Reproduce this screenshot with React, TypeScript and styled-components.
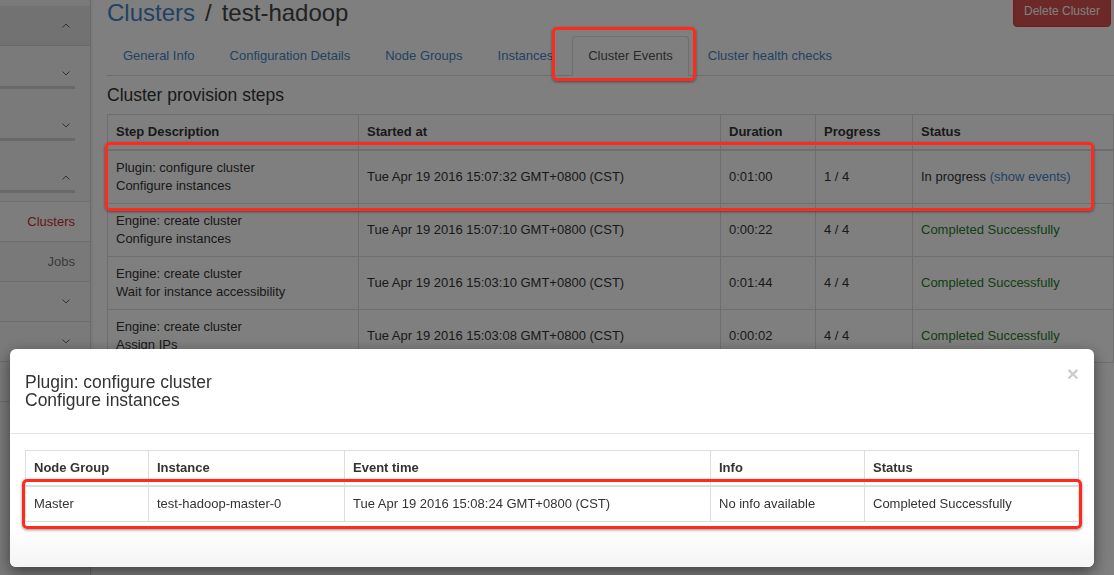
import styled, { createGlobalStyle } from "styled-components";

const GlobalStyle = createGlobalStyle`
  * { box-sizing: border-box; }
  html, body { margin: 0; padding: 0; height: 100%; overflow: hidden; }
  body {
    font-family: "Liberation Sans", Arial, sans-serif;
    font-size: 13px;
    line-height: 18px;
    color: #333;
    background: #fff;
  }
`;

const linkColor = "#3f86c6";
const borderColor = "#ddd";

const Page = styled.div`
  display: flex;
  height: 100vh;
`;

/* ---------- sidebar ---------- */

const Sidebar = styled.nav`
  width: 91px;
  flex: none;
  background: #f4f4f4;
  border-right: 1px solid #d4d4d4;
  box-shadow: 1px 0 3px rgba(0, 0, 0, 0.08);
  padding-top: 6px;
`;

const GroupHeader = styled.div`
  height: 40px;
  background: #e4e4e4;
  border-bottom: 1px solid #d2d2d2;
  display: flex;
  align-items: center;
  justify-content: flex-end;
  padding-right: 20px;
`;

const SubGroup = styled.div<{ $tall?: boolean }>`
  height: ${(p) => (p.$tall ? 52 : 43)}px;
  position: relative;
  display: flex;
  align-items: flex-end;
  justify-content: flex-end;
  padding: 0 20px 13px 0;

  &::after {
    content: "";
    position: absolute;
    left: 0;
    bottom: 0;
    width: 75px;
    height: 3px;
    background: #d2d2d2;
  }
`;

const PanelEnd = styled.div`
  height: 9px;
  border-bottom: 1px solid #e2e2e2;
`;

const NavItem = styled.div<{ $active?: boolean }>`
  height: 40px;
  display: flex;
  align-items: center;
  justify-content: flex-end;
  padding-right: 15px;
  color: ${(p) => (p.$active ? "#c9302c" : "#777")};
  background: ${(p) => (p.$active ? "#fbfbfb" : "#f2f2f2")};
  border-bottom: 1px solid #dadada;
`;

const CollapsedRow = styled.div`
  height: 40px;
  border-bottom: 1px solid #d8d8d8;
  display: flex;
  align-items: center;
  justify-content: flex-end;
  padding-right: 20px;
`;

function Chevron({ up }: { up?: boolean }) {
  return (
    <svg width="8" height="5" viewBox="0 0 8 5">
      <polyline
        points={up ? "0.5,4.5 4,1 7.5,4.5" : "0.5,0.5 4,4 7.5,0.5"}
        fill="none"
        stroke="#666"
        strokeWidth="1"
      />
    </svg>
  );
}

/* ---------- main ---------- */

const Main = styled.main`
  flex: 1;
  min-width: 0;
  padding-left: 16px;
`;

const PageHeader = styled.div`
  display: flex;
  justify-content: space-between;
  align-items: flex-start;
  height: 26px;
`;

const Title = styled.h1`
  margin: 0;
  font-size: 24px;
  line-height: 26px;
  font-weight: normal;
  color: #444;

  a {
    color: ${linkColor};
    text-decoration: none;
  }
`;

const Sep = styled.span`
  margin: 0 10px;
  color: #444;
`;

const DangerButton = styled.button`
  margin: -5px 3px 0 0;
  padding: 6px 10px;
  font-family: inherit;
  font-size: 12px;
  line-height: 18px;
  color: #fff;
  background: #d9534f;
  border: 1px solid #d43f3a;
  border-radius: 4px;
`;

const Tabs = styled.ul`
  display: flex;
  list-style: none;
  margin: 10px 0 0;
  padding: 0;
  border-bottom: 1px solid ${borderColor};
`;

const Tab = styled.li<{ $active?: boolean }>`
  margin: 0 3px -1px 0;
  padding: 10px 15px;
  border: 1px solid transparent;
  border-radius: 4px 4px 0 0;
  color: ${linkColor};
  white-space: nowrap;
  ${(p) =>
    p.$active &&
    `
    color: #555;
    background: #fff;
    border-color: ${borderColor};
    border-bottom-color: transparent;
  `}
`;

const SectionTitle = styled.h3`
  margin: 10px 0 9px;
  font-size: 17.5px;
  line-height: 19px;
  font-weight: 500;
  color: #333;
`;

const Table = styled.table`
  width: 100%;
  border-collapse: collapse;
  table-layout: fixed;
  border: 1px solid ${borderColor};
`;

const Th = styled.th<{ $w?: number }>`
  ${(p) => (p.$w ? `width: ${p.$w}px;` : "")}
  text-align: left;
  padding: 8px;
  font-weight: bold;
  border: 1px solid ${borderColor};
  border-bottom-width: 2px;
  white-space: nowrap;
`;

const Td = styled.td`
  padding: 8px;
  border: 1px solid ${borderColor};
  vertical-align: middle;
  white-space: nowrap;
  overflow: hidden;
`;

const Status = styled.span<{ $ok?: boolean }>`
  color: ${(p) => (p.$ok ? "#238023" : "#333")};
`;

const Link = styled.a`
  color: ${linkColor};
  text-decoration: none;
`;

/* ---------- overlay, modal, annotations ---------- */

const Backdrop = styled.div`
  position: fixed;
  inset: 0;
  background: rgba(0, 0, 0, 0.5);
  z-index: 10;
`;

const Modal = styled.div`
  position: fixed;
  left: 10px;
  top: 349px;
  width: 1084px;
  background: #fff;
  border-radius: 6px;
  box-shadow: 0 5px 15px rgba(0, 0, 0, 0.5);
  overflow: hidden;
  z-index: 20;
`;

const ModalHeader = styled.div`
  display: flex;
  justify-content: space-between;
  align-items: flex-start;
  padding: 24px 15px;
  border-bottom: 1px solid #e5e5e5;
`;

const ModalTitle = styled.h4`
  margin: 0;
  font-size: 17.5px;
  line-height: 18px;
  font-weight: normal;
  color: #333;
`;

const Close = styled.button`
  margin-top: -10px;
  padding: 0;
  border: 0;
  background: none;
  font-family: "Liberation Sans", Arial, sans-serif;
  font-size: 21px;
  line-height: 21px;
  font-weight: bold;
  color: #000;
  opacity: 0.2;
`;

const ModalBody = styled.div`
  padding: 16px 15px 15px;
  background: linear-gradient(#fff 70%, #f4f4f4);
`;

const ModalTable = styled(Table)`
  margin-bottom: 30px;
  background: #fff;
`;

const Annotation = styled.div<{ $x: number; $y: number; $w: number; $h: number }>`
  position: fixed;
  left: ${(p) => p.$x}px;
  top: ${(p) => p.$y}px;
  width: ${(p) => p.$w}px;
  height: ${(p) => p.$h}px;
  border: 3px solid #ff2a1c;
  border-radius: 5px;
  box-shadow: 0 1px 3px rgba(0, 0, 0, 0.45);
  z-index: 30;
`;

type Step = {
  plugin: string;
  step: string;
  started: string;
  duration: string;
  progress: string;
  done: boolean;
};

const steps: Step[] = [
  { plugin: "Plugin: configure cluster", step: "Configure instances", started: "15:07:32", duration: "0:01:00", progress: "1 / 4", done: false },
  { plugin: "Engine: create cluster", step: "Configure instances", started: "15:07:10", duration: "0:00:22", progress: "4 / 4", done: true },
  { plugin: "Engine: create cluster", step: "Wait for instance accessibility", started: "15:03:10", duration: "0:01:44", progress: "4 / 4", done: true },
  { plugin: "Engine: create cluster", step: "Assign IPs", started: "15:03:08", duration: "0:00:02", progress: "4 / 4", done: true },
];

const tabs = [
  "General Info",
  "Configuration Details",
  "Node Groups",
  "Instances",
  "Cluster Events",
  "Cluster health checks",
];

export default function App() {
  return (
    <>
      <GlobalStyle />
      <Page>
        <Sidebar>
          <GroupHeader>
            <Chevron up />
          </GroupHeader>
          <SubGroup>
            <Chevron />
          </SubGroup>
          <SubGroup $tall>
            <Chevron />
          </SubGroup>
          <SubGroup $tall>
            <Chevron up />
          </SubGroup>
          <PanelEnd />
          <NavItem $active>Clusters</NavItem>
          <NavItem>Jobs</NavItem>
          <CollapsedRow>
            <Chevron />
          </CollapsedRow>
          <CollapsedRow>
            <Chevron />
          </CollapsedRow>
          <CollapsedRow>
            <Chevron />
          </CollapsedRow>
        </Sidebar>

        <Main>
          <PageHeader>
            <Title>
              <a>Clusters</a>
              <Sep>/</Sep>
              test-hadoop
            </Title>
            <DangerButton>Delete Cluster</DangerButton>
          </PageHeader>

          <Tabs>
            {tabs.map((t) => (
              <Tab key={t} $active={t === "Cluster Events"}>
                {t}
              </Tab>
            ))}
          </Tabs>

          <SectionTitle>Cluster provision steps</SectionTitle>

          <Table>
            <thead>
              <tr>
                <Th $w={251}>Step Description</Th>
                <Th $w={362}>Started at</Th>
                <Th $w={95}>Duration</Th>
                <Th $w={97}>Progress</Th>
                <Th>Status</Th>
              </tr>
            </thead>
            <tbody>
              {steps.map((s, i) => (
                <tr key={i}>
                  <Td>
                    {s.plugin}
                    <br />
                    {s.step}
                  </Td>
                  <Td>Tue Apr 19 2016 {s.started} GMT+0800 (CST)</Td>
                  <Td>{s.duration}</Td>
                  <Td>{s.progress}</Td>
                  <Td>
                    {s.done ? (
                      <Status $ok>Completed Successfully</Status>
                    ) : (
                      <Status>
                        In progress <Link>(show events)</Link>
                      </Status>
                    )}
                  </Td>
                </tr>
              ))}
            </tbody>
          </Table>
        </Main>
      </Page>

      <Backdrop />
      <Annotation $x={552} $y={27} $w={144} $h={54} />
      <Annotation $x={105} $y={142} $w={989} $h={69} />

      <Modal>
        <ModalHeader>
          <ModalTitle>
            Plugin: configure cluster
            <br />
            Configure instances
          </ModalTitle>
          <Close>×</Close>
        </ModalHeader>
        <ModalBody>
          <ModalTable>
            <thead>
              <tr>
                <Th $w={123}>Node Group</Th>
                <Th $w={196}>Instance</Th>
                <Th $w={366}>Event time</Th>
                <Th $w={154}>Info</Th>
                <Th>Status</Th>
              </tr>
            </thead>
            <tbody>
              <tr>
                <Td>Master</Td>
                <Td>test-hadoop-master-0</Td>
                <Td>Tue Apr 19 2016 15:08:24 GMT+0800 (CST)</Td>
                <Td>No info available</Td>
                <Td>Completed Successfully</Td>
              </tr>
            </tbody>
          </ModalTable>
        </ModalBody>
      </Modal>
      <Annotation $x={22} $y={479} $w={1060} $h={50} />
    </>
  );
}
